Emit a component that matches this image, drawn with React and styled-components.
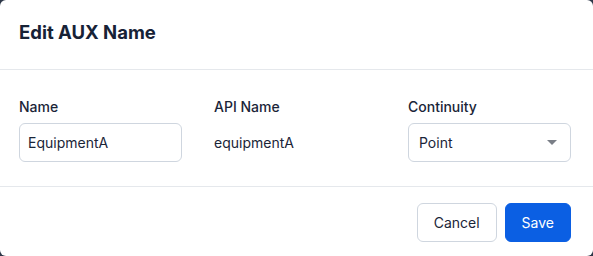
import React from "react";
import styled, { createGlobalStyle } from "styled-components";

const GlobalStyle = createGlobalStyle`
  html, body {
    margin: 0;
    padding: 0;
    background: #2d3748;
  }
  body {
    font-family: Inter, "Noto Sans", sans-serif;
    -webkit-font-smoothing: antialiased;
  }
`;

const Dialog = styled.div`
  width: 593px;
  height: 256px;
  background: #fff;
  border-radius: 6px;
  overflow: hidden;
  display: flex;
  flex-direction: column;
`;

const Header = styled.div`
  height: 69px;
  padding: 0 19px;
  display: flex;
  align-items: center;
  border-bottom: 1px solid #e5e8ec;
`;

const Title = styled.h2`
  margin: -5px 0 0;
  font-size: 18.5px;
  font-weight: 700;
  color: #172236;
`;

const Body = styled.div`
  padding: 25px 22px 24px 19px;
  display: grid;
  grid-template-columns: 163px 162px 163px;
  column-gap: 32px;
  border-bottom: 1px solid #e5e8ec;
`;

const Field = styled.div`
  display: flex;
  flex-direction: column;
  gap: 4px;
`;

const Label = styled.label`
  font-size: 14px;
  font-weight: 500;
  line-height: 24px;
  color: #1a2538;
`;

const boxBase = `
  box-sizing: border-box;
  height: 39px;
  width: 100%;
  border: 1px solid #cfd6df;
  border-radius: 6px;
  font-family: Inter, "Noto Sans", sans-serif;
  font-size: 14px;
  color: #1a2538;
  background: #fff;
`;

const Input = styled.input`
  ${boxBase}
  padding: 0 8px;
  outline: none;
`;

const Static = styled.div`
  height: 39px;
  display: flex;
  align-items: center;
  font-size: 14px;
  color: #1a2538;
`;

const Select = styled.div`
  ${boxBase}
  padding: 0 12px 0 10px;
  display: flex;
  align-items: center;
  justify-content: space-between;
`;

const Caret = styled.span`
  width: 0;
  height: 0;
  border-left: 5px solid transparent;
  border-right: 5px solid transparent;
  border-top: 5px solid #7a7f87;
  margin-right: 1px;
`;

const Footer = styled.div`
  padding: 16px 22px 0 0;
  display: flex;
  justify-content: flex-end;
  gap: 8px;
`;

const Button = styled.button`
  height: 39px;
  padding: 0 16px;
  border-radius: 6px;
  font-family: Inter, "Noto Sans", sans-serif;
  font-size: 14px;
  font-weight: 400;
  cursor: pointer;
  border: 1px solid ${(p) => (p.$primary ? "#0b5fe3" : "#cfd6df")};
  background: ${(p) => (p.$primary ? "#0b5fe3" : "#fff")};
  color: ${(p) => (p.$primary ? "#fff" : "#1a2538")};
`;

export default function App() {
  return (
    <>
      <GlobalStyle />
      <Dialog>
        <Header>
          <Title>Edit AUX Name</Title>
        </Header>
        <Body>
          <Field>
            <Label>Name</Label>
            <Input defaultValue="EquipmentA" />
          </Field>
          <Field>
            <Label>API Name</Label>
            <Static>equipmentA</Static>
          </Field>
          <Field>
            <Label>Continuity</Label>
            <Select>
              <span>Point</span>
              <Caret />
            </Select>
          </Field>
        </Body>
        <Footer>
          <Button>Cancel</Button>
          <Button $primary>Save</Button>
        </Footer>
      </Dialog>
    </>
  );
}
